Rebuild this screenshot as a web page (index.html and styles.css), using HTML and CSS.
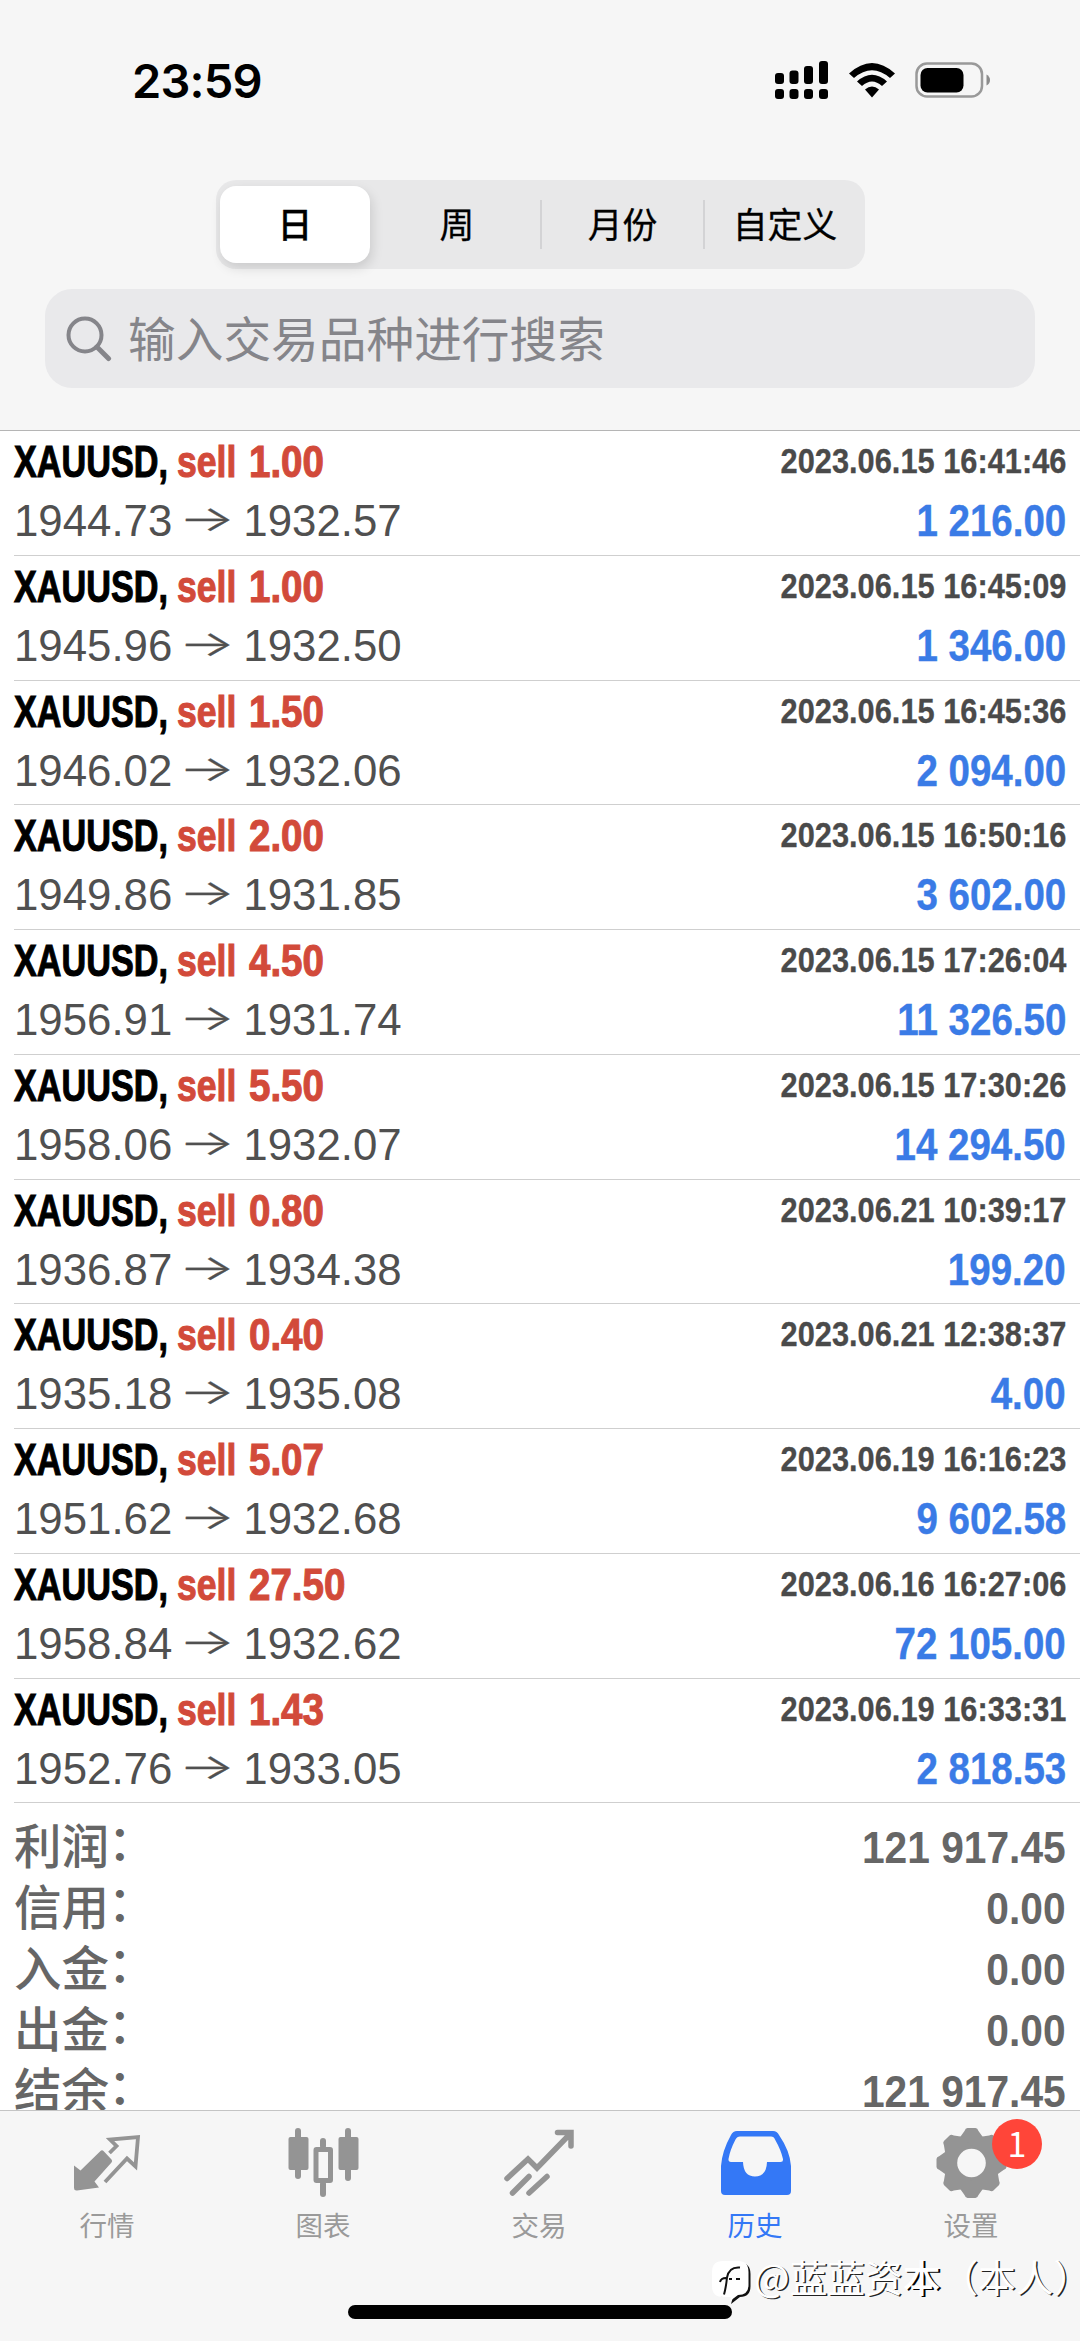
FILE: index.html
```html
<!DOCTYPE html>
<html lang="zh-CN">
<head>
<meta charset="utf-8">
<title>历史</title>
<link rel="stylesheet" href="styles.css">
</head>
<body>
<div class="screen">
  <header class="header">
    <div class="status">
      <span class="time">23:59</span>
      <div class="status-icons">
        <svg class="signal" width="54" height="38" viewBox="0 0 54 38">
          <rect x="0" y="12" width="9" height="11" rx="3"/><rect x="14.5" y="9.500" width="9" height="13.500" rx="3"/><rect x="29" y="5" width="9" height="18" rx="3"/><rect x="44" y="0" width="9" height="23" rx="3"/>
          <rect x="0" y="28" width="9" height="10" rx="3"/><rect x="14.500" y="28" width="9" height="10" rx="3"/><rect x="29" y="28" width="9" height="10" rx="3"/><rect x="44" y="28" width="9" height="10" rx="3"/>
        </svg>
        <svg class="wifi" width="46" height="35" viewBox="0 0 46 35">
          <path d="M0 10.500Q23-10.500 46 10.500L41 15Q23-.5 5 15Z"/><path d="M8 18.500Q23 5 38 18.500L33 23Q23 14 13 23Z"/><path d="M16 26.500Q23 20.500 30 26.500L23 34.500Z"/>
        </svg>
        <svg class="battery" width="76" height="36" viewBox="0 0 76 36">
          <rect x="1.500" y="1.500" width="65.500" height="33" rx="10.500" fill="none" stroke="#999" stroke-width="2.500"/><rect x="5.500" y="6" width="43" height="24.500" rx="7"/><path d="M71.500 12.500q3.500 2 3.500 5.500t-3.500 5.500z" fill="#8c8c8c"/>
        </svg>
      </div>
    </div>
    <nav class="segments">
      <span class="segment on">日</span><span class="segment">周</span><span class="segment split">月份</span><span class="segment split">自定义</span>
    </nav>
    <div class="search">
      <svg width="46" height="46" viewBox="0 0 46 46" fill="none" stroke="#85858a" stroke-width="4"><circle cx="19" cy="19" r="16.500"/><path d="M31 31L42.500 42.500" stroke-width="5" stroke-linecap="round"/></svg>
      <span>输入交易品种进行搜索</span>
    </div>
  </header>

  <main class="history">
    <article class="deal"><div class="line"><b class="symbol">XAUUSD,</b><b class="side">sell</b><b class="lots">1.00</b><b class="date">2023.06.15 16:41:46</b></div><div class="line second"><span class="price">1944.73</span><span class="arrow">→</span><span class="price">1932.57</span><b class="profit">1 216.00</b></div></article>
    <article class="deal"><div class="line"><b class="symbol">XAUUSD,</b><b class="side">sell</b><b class="lots">1.00</b><b class="date">2023.06.15 16:45:09</b></div><div class="line second"><span class="price">1945.96</span><span class="arrow">→</span><span class="price">1932.50</span><b class="profit">1 346.00</b></div></article>
    <article class="deal"><div class="line"><b class="symbol">XAUUSD,</b><b class="side">sell</b><b class="lots">1.50</b><b class="date">2023.06.15 16:45:36</b></div><div class="line second"><span class="price">1946.02</span><span class="arrow">→</span><span class="price">1932.06</span><b class="profit">2 094.00</b></div></article>
    <article class="deal"><div class="line"><b class="symbol">XAUUSD,</b><b class="side">sell</b><b class="lots">2.00</b><b class="date">2023.06.15 16:50:16</b></div><div class="line second"><span class="price">1949.86</span><span class="arrow">→</span><span class="price">1931.85</span><b class="profit">3 602.00</b></div></article>
    <article class="deal"><div class="line"><b class="symbol">XAUUSD,</b><b class="side">sell</b><b class="lots">4.50</b><b class="date">2023.06.15 17:26:04</b></div><div class="line second"><span class="price">1956.91</span><span class="arrow">→</span><span class="price">1931.74</span><b class="profit">11 326.50</b></div></article>
    <article class="deal"><div class="line"><b class="symbol">XAUUSD,</b><b class="side">sell</b><b class="lots">5.50</b><b class="date">2023.06.15 17:30:26</b></div><div class="line second"><span class="price">1958.06</span><span class="arrow">→</span><span class="price">1932.07</span><b class="profit">14 294.50</b></div></article>
    <article class="deal"><div class="line"><b class="symbol">XAUUSD,</b><b class="side">sell</b><b class="lots">0.80</b><b class="date">2023.06.21 10:39:17</b></div><div class="line second"><span class="price">1936.87</span><span class="arrow">→</span><span class="price">1934.38</span><b class="profit">199.20</b></div></article>
    <article class="deal"><div class="line"><b class="symbol">XAUUSD,</b><b class="side">sell</b><b class="lots">0.40</b><b class="date">2023.06.21 12:38:37</b></div><div class="line second"><span class="price">1935.18</span><span class="arrow">→</span><span class="price">1935.08</span><b class="profit">4.00</b></div></article>
    <article class="deal"><div class="line"><b class="symbol">XAUUSD,</b><b class="side">sell</b><b class="lots">5.07</b><b class="date">2023.06.19 16:16:23</b></div><div class="line second"><span class="price">1951.62</span><span class="arrow">→</span><span class="price">1932.68</span><b class="profit">9 602.58</b></div></article>
    <article class="deal"><div class="line"><b class="symbol">XAUUSD,</b><b class="side">sell</b><b class="lots">27.50</b><b class="date">2023.06.16 16:27:06</b></div><div class="line second"><span class="price">1958.84</span><span class="arrow">→</span><span class="price">1932.62</span><b class="profit">72 105.00</b></div></article>
    <article class="deal"><div class="line"><b class="symbol">XAUUSD,</b><b class="side">sell</b><b class="lots">1.43</b><b class="date">2023.06.19 16:33:31</b></div><div class="line second"><span class="price">1952.76</span><span class="arrow">→</span><span class="price">1933.05</span><b class="profit">2 818.53</b></div></article>
    <section class="summary">
      <div class="total"><span>利润<i>：</i></span><b>121 917.45</b></div>
      <div class="total"><span>信用<i>：</i></span><b>0.00</b></div>
      <div class="total"><span>入金<i>：</i></span><b>0.00</b></div>
      <div class="total"><span>出金<i>：</i></span><b>0.00</b></div>
      <div class="total"><span>结余<i>：</i></span><b>121 917.45</b></div>
    </section>
  </main>

  <footer class="footer">
    <nav class="tabs">
      <div class="tab">
        <svg width="76" height="76" viewBox="0 0 76 76"><path fill="#949494" d="M4 28.500l6.500 5L30.500 14q1.500-1.300 3 0l8 8.500q1.300 1.500 0 3L24.500 44.500l4.500 6L7 53.500q-3 .3-3-2.500z"/><path fill="none" stroke="#949494" stroke-width="3.800" d="M39.500 16l7-7L40 2.500 68 .2 65.500 29.500 57 21.500 35 45"/></svg>
        <span>行情</span>
      </div>
      <div class="tab">
        <svg width="76" height="76" viewBox="0 0 76 76" fill="#949494"><rect x="9" y="-9" width="6" height="51" rx="3"/><rect x="2.500" y="0" width="20" height="33" rx="2"/><rect x="59" y="-9" width="6" height="53" rx="3"/><rect x="52.500" y="0" width="20" height="33" rx="2"/><rect x="34" y="1" width="6" height="11" rx="3"/><rect x="34" y="44" width="6" height="16" rx="3"/><rect x="30" y="12.500" width="14.500" height="31" rx=".5" fill="none" stroke="#949494" stroke-width="5"/></svg>
        <span>图表</span>
      </div>
      <div class="tab">
        <svg width="76" height="76" viewBox="0 0 76 76" fill="none" stroke="#949494" stroke-width="5.500" stroke-linecap="round"><path d="M5 41.500L26 22l9 9L68-3M55.500-4.500H69V9"/><path d="M10.500 56L27 39.500M27 56L45 39.500"/></svg>
        <span>交易</span>
      </div>
      <div class="tab current">
        <svg width="76" height="76" viewBox="0 0 76 76"><path fill="#3478f6" fill-rule="evenodd" d="M19-6H55q4 0 6 4Q72 14 73 29V54q0 4-4 4H7q-4 0-4-4V29Q4 14 13-2q2-4 6-4ZM22-.5q-3 0-4.500 3Q12 13 10.500 22q-.3 3 2.500 3H25q.5 14.500 12 14.500T49 25H62.500q3 0 2.500-3Q63 13 57 2.500q-1-3-4-3Z"/></svg>
        <span>历史</span>
      </div>
      <div class="tab">
        <svg width="76" height="76" viewBox="0 0 76 76"><g fill="#949494" transform="translate(37.500 26)"><circle r="28"/><path id="teeth" d="M-12-25l5-7q1-3 3-3h8q2 0 3 3l5 7V25l-5 7q-1 3-3 3h-8q-2 0-3-3l-5-7z"/><use href="#teeth" transform="rotate(45)"/><use href="#teeth" transform="rotate(90)"/><use href="#teeth" transform="rotate(135)"/><circle r="14.300" fill="#f6f6f6"/></g></svg>
        <span>设置</span>
        <i class="badge">1</i>
      </div>
    </nav>
    <div class="home"></div>
    <div class="watermark">
      <svg width="40" height="46" viewBox="0 0 40 46"><path d="M14 5H28Q38.500 5 38.500 16V28Q38.500 39 28 39L19 46 21 39H14Q3 39 3 28V16Q3 5 14 5Z" fill="#111"/><path d="M11 3H26Q36.500 3 36.500 14V27Q36.500 37 26 37L18 43 19 39H11Q0 39 0 28V14Q0 3 11 3Z" fill="#fff"/><path d="M28 9.500q-11-1-13 10-1 10-3 17M8 24q1-4 6-4M17 21h3M24 21h4" fill="none" stroke="#111" stroke-width="2"/></svg>
      <span>@蓝蓝资<em>本</em>（本人）</span>
    </div>
  </footer>
</div>
</body>
</html>
```
FILE: styles.css
```css
* { box-sizing: border-box; }
body {
  margin: 0;
  background: #f6f6f6;
  font-family: "Liberation Sans", "Noto Sans CJK SC", sans-serif;
}
.screen {
  width: 1080px;
  height: 2341px;
  display: flex;
  flex-direction: column;
  overflow: hidden;
}

/* Header */
.header {
  height: 431px;
  flex: none;
  display: flex;
  flex-direction: column;
  background: #f6f6f6;
  border-bottom: 1px solid #b5b5b5;
}
.status {
  height: 180px;
  padding: 61px 89px 0 132px;
  display: flex;
  justify-content: space-between;
  align-items: flex-start;
}
.time {
  font: 600 47px/40px Inter, sans-serif;
  letter-spacing: -.8px;
  white-space: nowrap;
}
.status-icons { display: flex; align-items: flex-start; }
.wifi { margin: 2px 0 0 20px; }
.battery { margin: 1px 0 0 20px; }
.segments {
  width: 649px;
  height: 89px;
  margin-left: 216px;
  display: grid;
  grid-template-columns: 158px 166px 163px 162px;
  align-items: center;
  border-radius: 20px;
  background: #e8e8e9;
}
.segment {
  height: 49px;
  font: 400 34.800px/47px "Noto Sans CJK SC", sans-serif;
  text-align: center;
  -webkit-text-stroke: .3px;
}
.segment.on {
  height: 77px;
  margin: 0 4px;
  font-weight: 500;
  line-height: 75px;
  border-radius: 16px;
  background: #fff;
  box-shadow: 2px 5px 12px rgba(0, 0, 0, .13);
}
.segment.split { border-left: 2px solid #d3d3d5; }
.search {
  width: 990px;
  height: 99px;
  margin: 20px 0 0 45px;
  padding-left: 21px;
  display: flex;
  align-items: center;
  gap: 16px;
  border-radius: 27px;
  background: #e9e9eb;
  color: #85858a;
  font: 400 47.700px/95px "Noto Sans CJK SC", sans-serif;
}
.search span { height: 99px; }

/* Deals */
.history {
  height: 1679px;
  flex: none;
  padding-left: 14px;
  overflow: hidden;
  background: #fff;
}
.deal { height: 124.750px; border-bottom: 1px solid #cfcfcf; }
.line {
  height: 62px;
  display: flex;
  line-height: 62px;
  white-space: nowrap;
  font-size: 45px;
}
.line.second { height: 54px; line-height: 55px; }
.symbol, .side, .lots { transform-origin: left; -webkit-text-stroke: 1.100px; }
.symbol { width: 163px; transform: scaleX(.76); }
.side { width: 72px; transform: scaleX(.79); color: #d24a3a; }
.lots { width: 100px; transform: scaleX(.855); color: #d24a3a; }
.date, .profit {
  margin-left: auto;
  margin-right: 14px;
  transform-origin: right;
}
.date {
  transform: scaleX(.892);
  color: #4a4a4a;
  font-size: 34.500px;
  line-height: 61px;
  -webkit-text-stroke: .3px;
}
.profit {
  transform: scaleX(.875);
  color: #3a7be6;
  font-size: 44px;
  -webkit-text-stroke: .4px;
}
.price { color: #505050; font-size: 43.800px; }
.arrow {
  width: 71px;
  color: #505050;
  font-family: Inter, sans-serif;
  font-weight: 300;
  font-size: 48px;
  text-align: center;
  transform: translate(-.5px, -3px) scale(1.240, .75);
  -webkit-text-stroke: .4px;
}

/* Totals */
.summary { padding-top: 10px; color: #666; }
.total {
  height: 61px;
  padding-right: 14px;
  display: flex;
  justify-content: space-between;
  align-items: baseline;
  font: 500 47.500px/61px "Noto Sans CJK SC", sans-serif;
}
.total i {
  display: inline-block;
  margin-left: -1px;
  font-style: normal;
  transform: translateY(-4px);
}
.total b {
  font: bold 44.500px/50px "Liberation Sans", sans-serif;
  transform: translateY(-1px) scaleX(.915);
  transform-origin: right;
}

/* Tab bar */
.footer {
  position: relative;
  height: 231px;
  flex: none;
  display: flex;
  flex-direction: column;
  align-items: center;
  border-top: 1px solid #c4c4c4;
  background: #f6f6f6;
}
.tabs {
  width: 1080px;
  height: 194px;
  display: grid;
  grid-template-columns: repeat(5, 1fr);
}
.tab {
  position: relative;
  padding-top: 26px;
  display: flex;
  flex-direction: column;
  align-items: center;
  color: #9a9a9a;
  font: 400 27.500px/40px "Noto Sans CJK SC", sans-serif;
}
.tab svg { overflow: visible; }
.tab span { margin: -9px 2px 0 0; }
.tab.current { color: #3478f6; }
.badge {
  position: absolute;
  left: 128px;
  top: 8px;
  width: 50px;
  height: 50px;
  border-radius: 50%;
  background: #ff4539;
  color: #fff;
  font: normal 400 34px/48px "Noto Sans CJK SC", sans-serif;
  text-align: center;
}
.home { width: 384px; height: 14px; border-radius: 7px; background: #000; }
.watermark {
  position: absolute;
  left: 712px;
  top: 147px;
  width: 368px;
  display: flex;
  overflow: hidden;
  color: #fff;
  font: 400 37.700px/48px "Noto Sans CJK SC", sans-serif;
  text-shadow: 1.500px 1px 0 #222;
  white-space: nowrap;
}
.watermark svg { flex: none; }
.watermark span { margin: -6px 0 0 2px; }
.watermark em { font-style: normal; font-weight: 500; text-shadow: 2px 1px 0 #000; }
```
